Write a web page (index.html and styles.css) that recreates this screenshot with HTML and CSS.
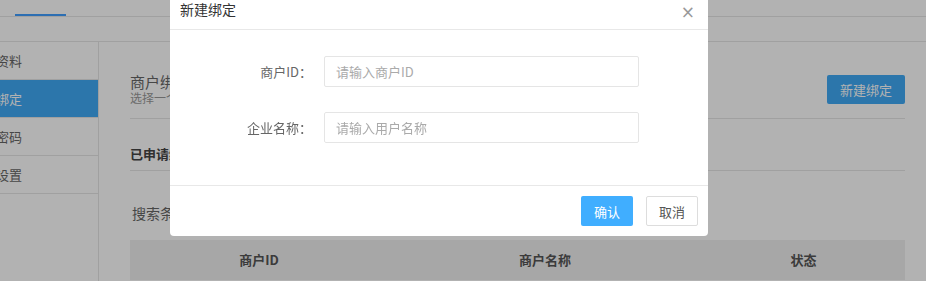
FILE: index.html
```html
<!DOCTYPE html>
<html lang="zh-CN">
<head>
    <meta charset="UTF-8">
    <meta name="viewport" content="width=device-width, initial-scale=1.0">
    <title>商户绑定</title>
    <link rel="stylesheet" href="styles.css">
</head>
<body>
    <!-- 顶部导航 -->
    <div class="tabs">
        <div class="tab active">账户设置</div>
        <div class="tab">消息中心</div>
    </div>
    <div class="subbar"></div>

    <div class="layout">
        <!-- 左侧菜单 -->
        <ul class="sidebar">
            <li class="menu-item">基本资料</li>
            <li class="menu-item active">商户绑定</li>
            <li class="menu-item">修改密码</li>
            <li class="menu-item">安全设置</li>
        </ul>

        <!-- 内容区 -->
        <div class="content">
            <div class="page-header">
                <div>
                    <div class="page-title">商户绑定</div>
                    <div class="page-desc">选择一个商户进行绑定</div>
                </div>
                <button class="btn-primary">新建绑定</button>
            </div>
            <div class="section-title">已申请绑定的商户</div>
            <div class="search-row">搜索条件：</div>
            <div class="table-head">
                <div class="col col-id">商户ID</div>
                <div class="col col-name">商户名称</div>
                <div class="col col-status">状态</div>
            </div>
        </div>
    </div>

    <!-- 新建绑定弹窗 -->
    <div class="mask"></div>
    <div class="modal">
        <div class="modal-header">
            <span class="modal-title">新建绑定</span>
            <span class="modal-close">&times;</span>
        </div>
        <form class="modal-body">
            <div class="form-row">
                <label for="merchantId">商户ID：</label>
                <input type="text" id="merchantId" placeholder="请输入商户ID">
            </div>
            <div class="form-row">
                <label for="companyName">企业名称：</label>
                <input type="text" id="companyName" placeholder="请输入用户名称">
            </div>
        </form>
        <div class="modal-footer">
            <button class="btn-confirm">确认</button>
            <button class="btn-cancel">取消</button>
        </div>
    </div>
</body>
</html>
```

FILE: styles.css
```css
body {
    margin: 0;
    font-family: "Noto Sans CJK SC", "Noto Sans", sans-serif;
    background-color: #fff;
    color: #555;
    overflow: hidden;
}

.tabs {
    display: flex;
    height: 46px;
    margin-top: -30px;
    padding-left: 15px;
    border-bottom: 1px solid #e6e6e6;
}

.tab {
    width: 51px;
    font-size: 13px;
    line-height: 30px;
    text-align: center;
    color: #555;
    white-space: nowrap;
}

.tab.active {
    border-bottom: 2px solid #409eff;
    height: 44px;
}

.subbar {
    height: 24px;
    border-bottom: 1px solid #e6e6e6;
}

.layout {
    display: flex;
    margin-left: -40px;
    height: 300px;
}

.sidebar {
    list-style: none;
    margin: 0;
    padding: 0;
    width: 138px;
    border-right: 1px solid #e6e6e6;
}

.menu-item {
    height: 37px;
    line-height: 37px;
    padding-left: 10px;
    font-size: 13px;
    color: #666;
    border-bottom: 1px solid #e6e6e6;
}

.menu-item.active {
    background-color: #3fa9f5;
    color: #fff;
}

.content {
    flex: 1;
    padding: 0 21px 0 31px;
}

.page-header {
    display: flex;
    justify-content: space-between;
    align-items: center;
    padding: 31px 0 13px;
    border-bottom: 1px solid #e6e6e6;
}

.page-title {
    font-size: 15px;
    line-height: 18px;
    color: #666;
}

.page-desc {
    font-size: 12px;
    line-height: 14px;
    color: #999;
}

.btn-primary {
    width: 78px;
    height: 29px;
    border: none;
    border-radius: 2px;
    background-color: #3fa9f5;
    color: #fff;
    font-family: inherit;
    font-size: 13px;
}

.section-title {
    padding: 27px 0 8px;
    line-height: 16px;
    font-size: 13px;
    font-weight: bold;
    color: #444;
    border-bottom: 1px solid #e6e6e6;
}

.search-row {
    padding: 33px 0 18px 2px;
    line-height: 18px;
    font-size: 14px;
    color: #666;
}

.table-head {
    display: flex;
    height: 40px;
    line-height: 40px;
    background-color: #f0f0f0;
    font-size: 13px;
    font-weight: bold;
    color: #555;
}

.col {
    text-align: center;
}

.col-id {
    width: 258px;
}

.col-name {
    width: 314px;
}

.col-status {
    flex: 1;
}

.mask {
    position: fixed;
    inset: 0;
    background-color: rgba(0, 0, 0, 0.3);
}

.modal {
    position: absolute;
    left: 170px;
    top: -11px;
    width: 538px;
    background: #fff;
    border-radius: 4px;
}

.modal-header {
    display: flex;
    justify-content: space-between;
    align-items: center;
    height: 40px;
    padding: 0 13px 0 10px;
    border-bottom: 1px solid #e8e8e8;
}

.modal-title {
    font-size: 14px;
    line-height: 20px;
    color: #333;
}

.modal-close {
    font-family: "DejaVu Sans", sans-serif;
    font-size: 17px;
    line-height: 20px;
    color: #999;
    padding-top: 6px;
}

.modal-body {
    padding: 26px 0 17px;
    margin: 0;
}

.form-row {
    display: grid;
    grid-template-columns: 142px 315px;
    column-gap: 12px;
    align-items: center;
    margin-bottom: 25px;
}

.form-row label {
    text-align: right;
    font-size: 13px;
    color: #666;
}

.form-row input {
    height: 31px;
    padding: 0 11px;
    border: 1px solid #e5e5e5;
    border-radius: 2px;
    box-sizing: border-box;
    font-family: inherit;
    font-size: 13px;
    outline: none;
}

.form-row input::placeholder {
    color: #aaa;
}

.modal-footer {
    display: flex;
    justify-content: flex-end;
    gap: 13px;
    padding: 10px;
    border-top: 1px solid #e8e8e8;
}

.modal-footer button {
    width: 52px;
    height: 30px;
    border-radius: 2px;
    font-family: inherit;
    font-size: 13px;
}

.btn-confirm {
    border: none;
    background-color: #40aeff;
    color: #fff;
}

.btn-cancel {
    border: 1px solid #ddd;
    background-color: #fff;
    color: #555;
}
```
